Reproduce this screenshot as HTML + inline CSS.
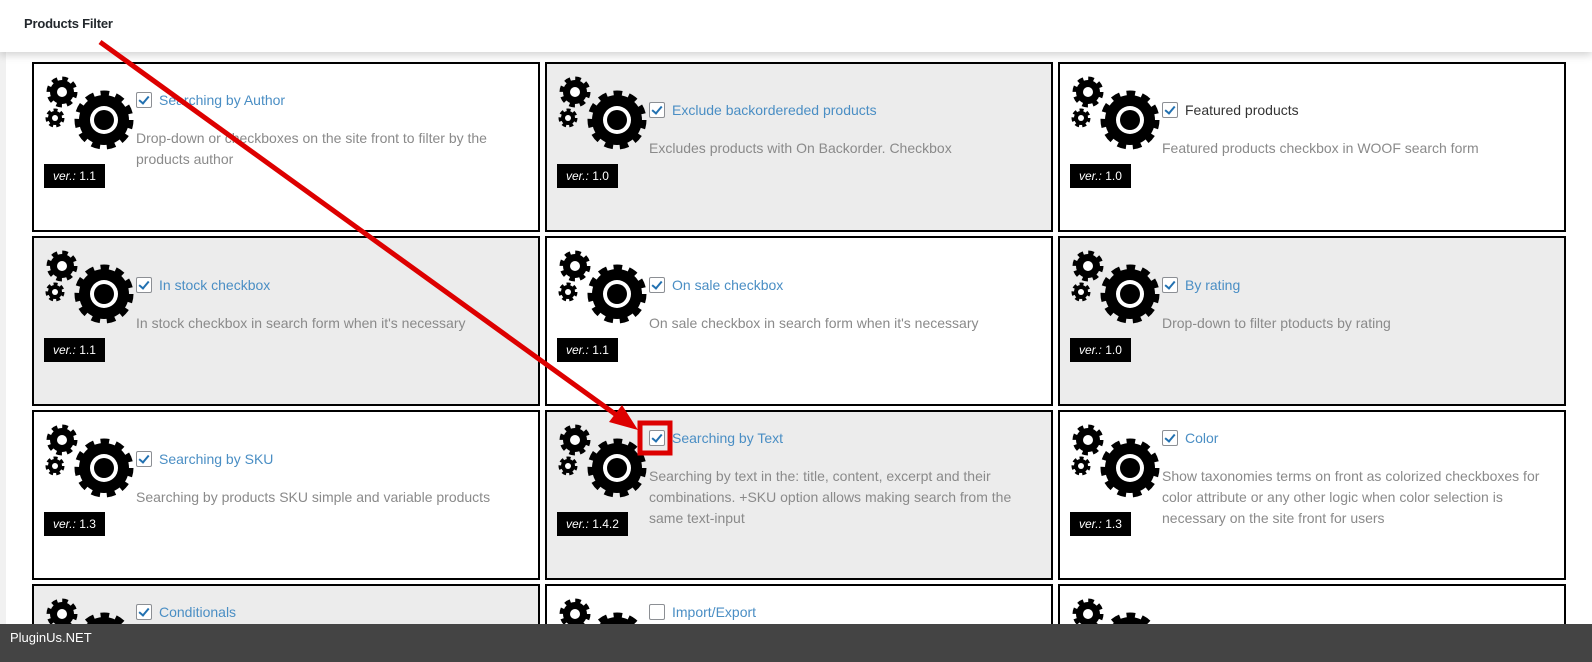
<!DOCTYPE html>
<html style="width:1592px;height:662px;overflow:hidden"><head><meta charset="utf-8">
<style>
*{box-sizing:border-box;margin:0;padding:0}
body{width:1592px;height:662px;overflow:hidden;background:#f1f1f1;font-family:"Liberation Sans",sans-serif;position:relative}
.hdr{position:absolute;left:0;top:0;width:1592px;height:52px;background:#fff;box-shadow:0 3px 8px rgba(0,0,0,.18);z-index:2}
.hdr span{position:absolute;left:24px;top:16px;font-size:13px;color:#23282d;font-weight:bold;letter-spacing:-.2px}
.main{position:absolute;left:6px;top:52px;width:1586px;height:572px;background:#fff}
.card{position:absolute;width:508px;height:170px;border:2px solid #000;background:#fff;overflow:hidden}
.g{background:#ececec}
.card svg.gear{position:absolute;left:8px;top:6px}
.ver{position:absolute;left:10px;top:100px;height:24px;background:#000;color:#fff;font-size:12px;line-height:24px;padding:0 9px 0 9px}
.ver i{font-style:italic}
.txt{position:absolute;left:102px;width:390px}
.t{font-size:14px;color:#4a8ec4;height:20px;line-height:20px;display:flex;align-items:center}
.t.d{color:#333}
.cb{width:16px;height:16px;border:1px solid #8c8f94;background:#fff;margin-right:7px;border-radius:2px;position:relative;flex:none}
.cb.on::after{content:"";position:absolute;left:4px;top:1px;width:4px;height:8px;border:solid #2271b1;border-width:0 2px 2px 0;transform:rotate(40deg)}
.ds{font-size:14px;color:#8a8a8a;line-height:21px;margin-top:18px}
.foot{position:absolute;left:0;top:624px;width:1592px;height:38px;background:#444;color:#fff;font-size:13px;padding:6px 10px;z-index:3}
</style></head><body>
<svg width="0" height="0" style="position:absolute">
<defs>
<g id="gr">
<circle cx="20" cy="22" r="12" fill="none" stroke="#000" stroke-width="7" stroke-dasharray="5 4.4"/>
<circle cx="20" cy="22" r="12" fill="#000"/>
<circle cx="20" cy="22" r="5" fill="#fff"/>
<circle cx="13" cy="48" r="7" fill="none" stroke="#000" stroke-width="5" stroke-dasharray="3.5 2.8"/>
<circle cx="13" cy="48" r="7" fill="#000"/>
<circle cx="13" cy="48" r="3" fill="#fff"/>
<circle cx="62" cy="50" r="25" fill="none" stroke="#000" stroke-width="9" stroke-dasharray="8 6.3"/>
<circle cx="62" cy="50" r="25" fill="#000"/>
<circle cx="62" cy="50" r="14" fill="#fff"/>
<circle cx="62" cy="50" r="10" fill="#000"/>
</g>
</defs>
</svg>
<div class="hdr"><span>Products Filter</span></div>
<div class="main"></div>

<div class="card" style="left:32px;top:62px"><svg class="gear" width="92" height="84"><use href="#gr"/></svg><div class="ver"><i>ver.:</i> 1.1</div>
<div class="txt" style="top:26px"><div class="t"><span class="cb on"></span>Searching by Author</div><div class="ds">Drop-down or checkboxes on the site front to filter by the products author</div></div></div>
<div class="card g" style="left:545px;top:62px"><svg class="gear" width="92" height="84"><use href="#gr"/></svg><div class="ver"><i>ver.:</i> 1.0</div>
<div class="txt" style="top:36px"><div class="t"><span class="cb on"></span>Exclude backordereded products</div><div class="ds">Excludes products with On Backorder. Checkbox</div></div></div>
<div class="card" style="left:1058px;top:62px"><svg class="gear" width="92" height="84"><use href="#gr"/></svg><div class="ver"><i>ver.:</i> 1.0</div>
<div class="txt" style="top:36px"><div class="t d"><span class="cb on"></span>Featured products</div><div class="ds">Featured products checkbox in WOOF search form</div></div></div>

<div class="card g" style="left:32px;top:236px"><svg class="gear" width="92" height="84"><use href="#gr"/></svg><div class="ver"><i>ver.:</i> 1.1</div>
<div class="txt" style="top:37px"><div class="t"><span class="cb on"></span>In stock checkbox</div><div class="ds">In stock checkbox in search form when it's necessary</div></div></div>
<div class="card" style="left:545px;top:236px"><svg class="gear" width="92" height="84"><use href="#gr"/></svg><div class="ver"><i>ver.:</i> 1.1</div>
<div class="txt" style="top:37px"><div class="t"><span class="cb on"></span>On sale checkbox</div><div class="ds">On sale checkbox in search form when it's necessary</div></div></div>
<div class="card g" style="left:1058px;top:236px"><svg class="gear" width="92" height="84"><use href="#gr"/></svg><div class="ver"><i>ver.:</i> 1.0</div>
<div class="txt" style="top:37px"><div class="t"><span class="cb on"></span>By rating</div><div class="ds">Drop-down to filter ptoducts by rating</div></div></div>

<div class="card" style="left:32px;top:410px"><svg class="gear" width="92" height="84"><use href="#gr"/></svg><div class="ver"><i>ver.:</i> 1.3</div>
<div class="txt" style="top:37px"><div class="t"><span class="cb on"></span>Searching by SKU</div><div class="ds">Searching by products SKU simple and variable products</div></div></div>
<div class="card g" style="left:545px;top:410px"><svg class="gear" width="92" height="84"><use href="#gr"/></svg><div class="ver"><i>ver.:</i> 1.4.2</div>
<div class="txt" style="top:16px"><div class="t"><span class="cb on"></span>Searching by Text</div><div class="ds">Searching by text in the: title, content, excerpt and their combinations. +SKU option allows making search from the same text-input</div></div></div>
<div class="card" style="left:1058px;top:410px"><svg class="gear" width="92" height="84"><use href="#gr"/></svg><div class="ver"><i>ver.:</i> 1.3</div>
<div class="txt" style="top:16px"><div class="t"><span class="cb on"></span>Color</div><div class="ds">Show taxonomies terms on front as colorized checkboxes for color attribute or any other logic when color selection is necessary on the site front for users</div></div></div>

<div class="card g" style="left:32px;top:584px;height:78px"><svg class="gear" width="92" height="84"><use href="#gr"/></svg>
<div class="txt" style="top:16px"><div class="t"><span class="cb on"></span>Conditionals</div></div></div>
<div class="card" style="left:545px;top:584px;height:78px"><svg class="gear" width="92" height="84"><use href="#gr"/></svg>
<div class="txt" style="top:16px"><div class="t"><span class="cb"></span>Import/Export</div></div></div>
<div class="card" style="left:1058px;top:584px;height:78px"><svg class="gear" width="92" height="84"><use href="#gr"/></svg></div>

<svg style="position:absolute;left:0;top:0;z-index:4" width="1592" height="662">
<line x1="100" y1="42" x2="622" y2="419" stroke="#d00" stroke-width="5"/>
<polygon points="638,430 609,422 622,405" fill="#d00"/>
<rect x="640" y="423" width="30" height="30" fill="none" stroke="#d00" stroke-width="5"/>
</svg>
<div class="foot">PluginUs.NET</div>
</body></html>
